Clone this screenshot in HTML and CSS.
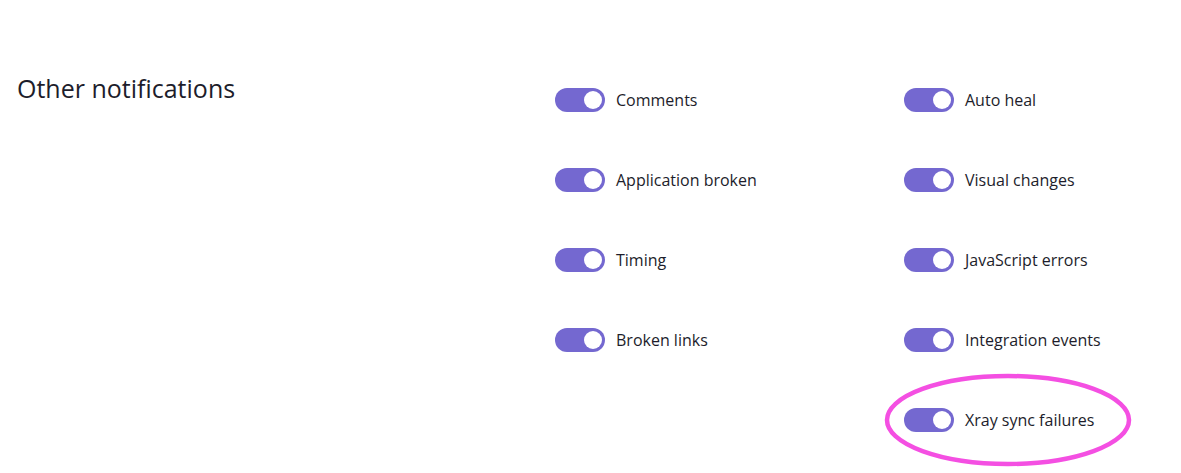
FILE: index.html
```html
<!DOCTYPE html>
<html lang="en">

<head>
    <meta charset="UTF-8">
    <meta name="viewport" content="width=device-width, initial-scale=1.0">
    <title>Notification settings</title>
    <link rel="stylesheet" href="styles.css">
</head>

<body>
    <div class="settings-row">
        <h2 class="settings-title">Other notifications</h2>

        <!-- Toggle list -->
        <div class="toggle-grid">
            <label class="toggle-item"><input type="checkbox" checked><span class="switch"></span>Comments</label>
            <label class="toggle-item"><input type="checkbox" checked><span class="switch"></span>Auto heal</label>
            <label class="toggle-item"><input type="checkbox" checked><span class="switch"></span>Application broken</label>
            <label class="toggle-item"><input type="checkbox" checked><span class="switch"></span>Visual changes</label>
            <label class="toggle-item"><input type="checkbox" checked><span class="switch"></span>Timing</label>
            <label class="toggle-item"><input type="checkbox" checked><span class="switch"></span>JavaScript errors</label>
            <label class="toggle-item"><input type="checkbox" checked><span class="switch"></span>Broken links</label>
            <label class="toggle-item"><input type="checkbox" checked><span class="switch"></span>Integration events</label>
            <span class="toggle-spacer"></span>
            <label class="toggle-item highlighted">
                <input type="checkbox" checked><span class="switch"></span>Xray sync failures
                <svg class="ring" viewBox="0 0 250 96" width="250" height="96">
                    <ellipse cx="125" cy="48" rx="121" ry="44" fill="none" stroke="#f44fe2" stroke-width="4.5" />
                </svg>
            </label>
        </div>
    </div>
</body>

</html>
```

FILE: styles.css
```css
/* General Styling */
body {
    font-family: 'Open Sans', 'Liberation Sans', sans-serif;
    margin: 0;
    padding: 0;
    min-height: 100vh;
    background: #fff;
    color: #1d1d2b;
}

.settings-row {
    display: flex;
    padding: 70px 0 60px 17px;
}

.settings-title {
    width: 538px;
    flex-shrink: 0;
    margin: 0;
    font-size: 25px;
    font-weight: 400;
    line-height: 36px;
}

.toggle-grid {
    display: grid;
    grid-template-columns: 349px 260px;
    row-gap: 56px;
    padding-top: 18px;
}

.toggle-item {
    position: relative;
    display: flex;
    align-items: center;
    gap: 11px;
    height: 24px;
    font-size: 16px;
    cursor: pointer;
}

.toggle-item input {
    display: none;
}

.switch {
    position: relative;
    width: 50px;
    height: 24px;
    border-radius: 12px;
    background: #c9c9d4;
    flex-shrink: 0;
}

.switch::after {
    content: "";
    position: absolute;
    top: 3px;
    left: 3px;
    width: 18px;
    height: 18px;
    border-radius: 50%;
    background: #fff;
}

.toggle-item input:checked + .switch {
    background: #7468d0;
}

.toggle-item input:checked + .switch::after {
    left: 29px;
}

/* Highlight ring round one option */
.ring {
    position: absolute;
    left: -21px;
    top: -36px;
    pointer-events: none;
}
```
